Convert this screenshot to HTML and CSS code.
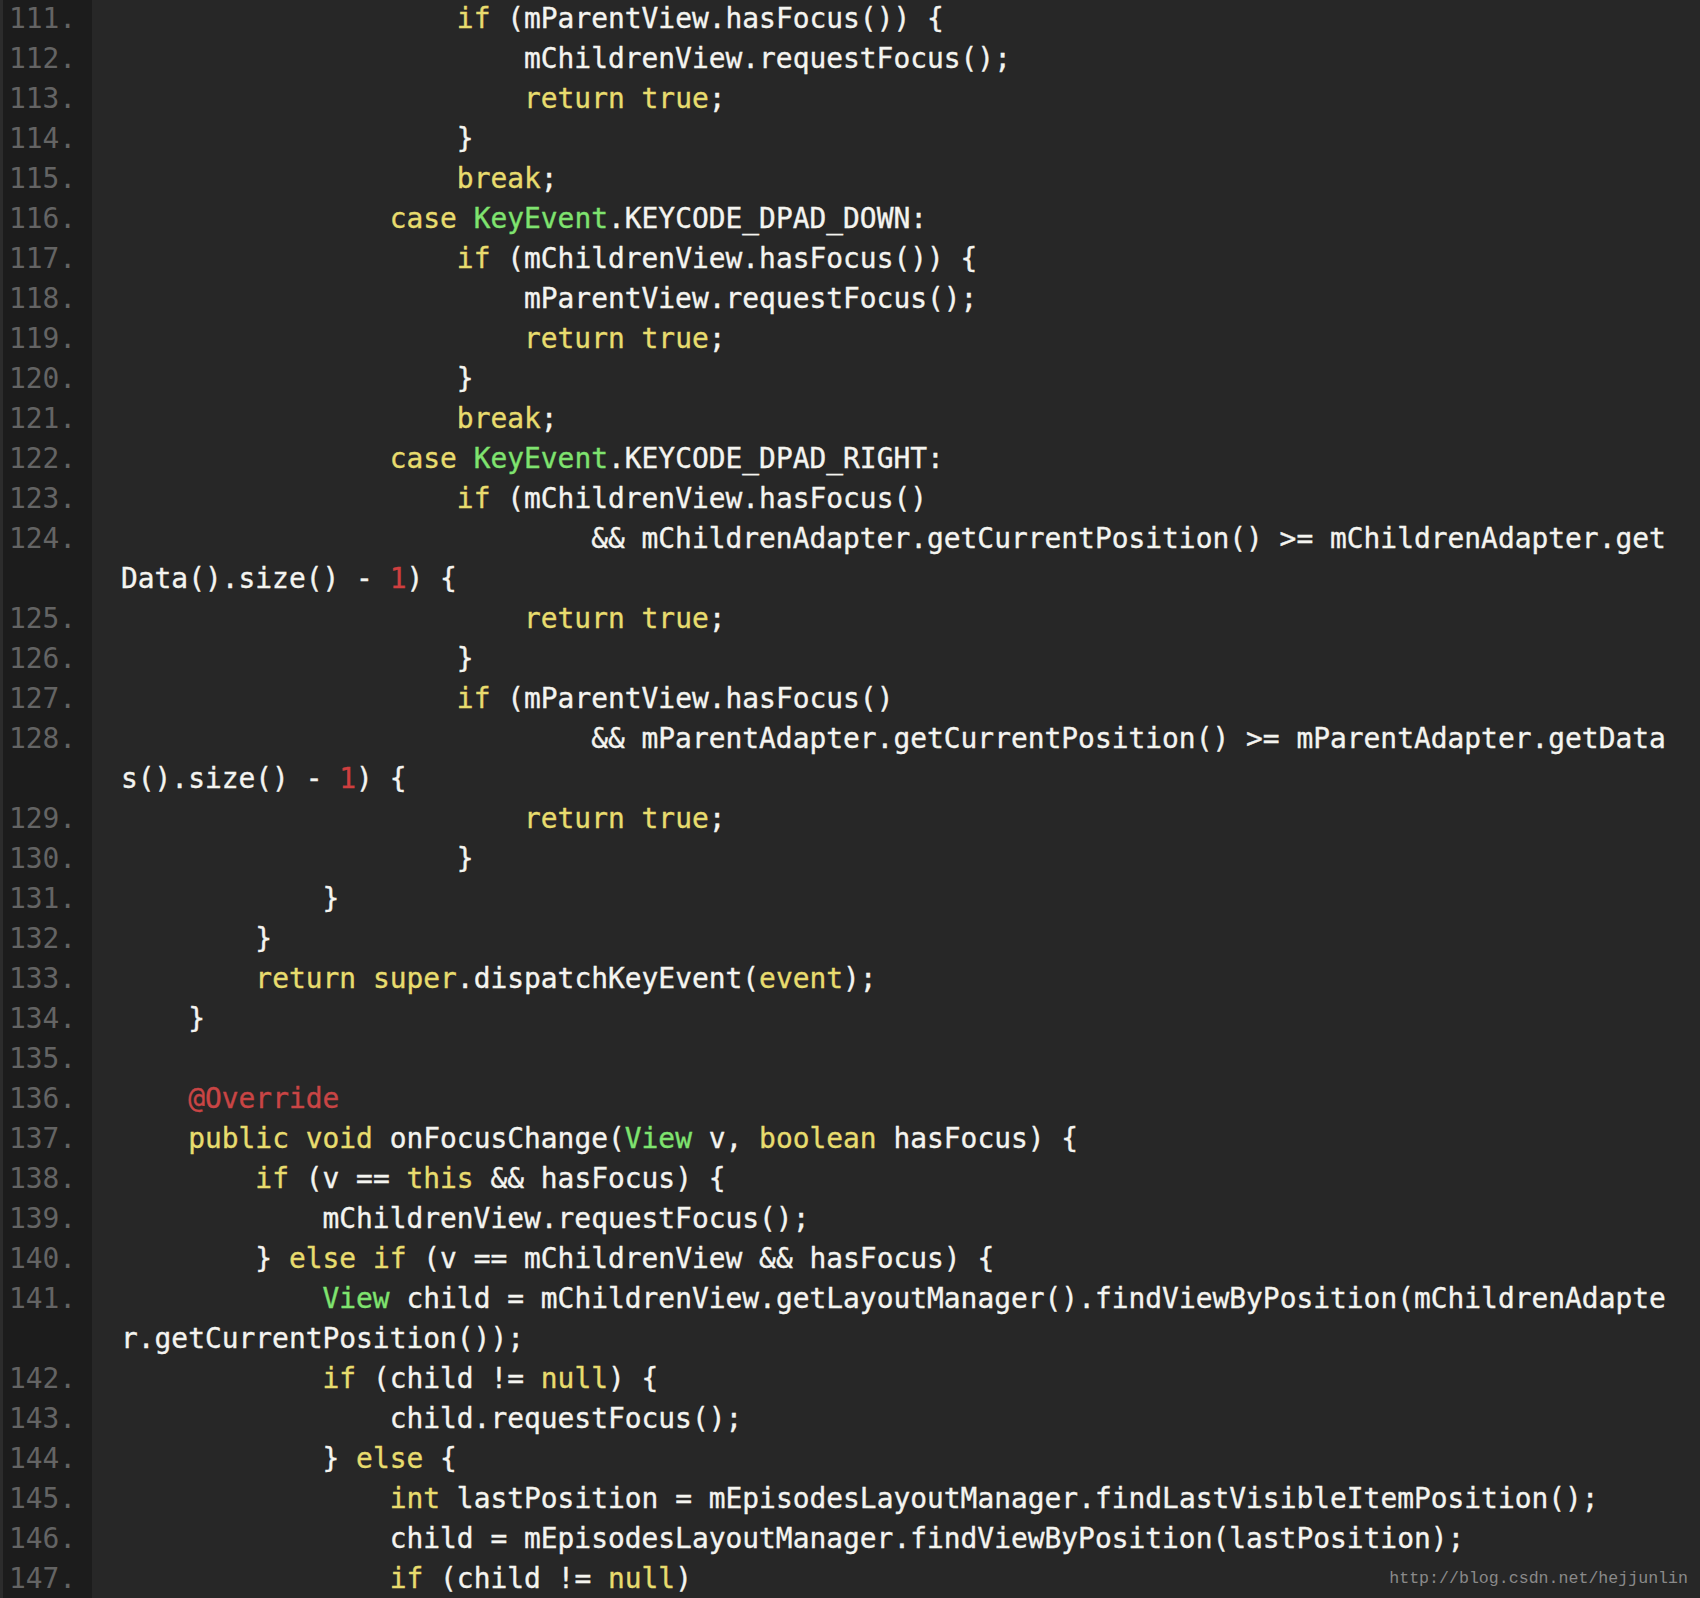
FILE: index.html
```html
<!DOCTYPE html>
<html lang="en">
<head>
  <meta charset="UTF-8" />
  <title>dispatchKeyEvent</title>
  <link rel="stylesheet" href="styles.css">
</head>
<body>

  <div class="editor">
    <div class="row"><span class="no">111.</span><span class="src">                    <b class="kw">if</b> (mParentView.hasFocus()) {</span></div>
    <div class="row"><span class="no">112.</span><span class="src">                        mChildrenView.requestFocus();</span></div>
    <div class="row"><span class="no">113.</span><span class="src">                        <b class="kw">return</b> <b class="kw">true</b>;</span></div>
    <div class="row"><span class="no">114.</span><span class="src">                    }</span></div>
    <div class="row"><span class="no">115.</span><span class="src">                    <b class="kw">break</b>;</span></div>
    <div class="row"><span class="no">116.</span><span class="src">                <b class="kw">case</b> <b class="ty">KeyEvent</b>.KEYCODE_DPAD_DOWN:</span></div>
    <div class="row"><span class="no">117.</span><span class="src">                    <b class="kw">if</b> (mChildrenView.hasFocus()) {</span></div>
    <div class="row"><span class="no">118.</span><span class="src">                        mParentView.requestFocus();</span></div>
    <div class="row"><span class="no">119.</span><span class="src">                        <b class="kw">return</b> <b class="kw">true</b>;</span></div>
    <div class="row"><span class="no">120.</span><span class="src">                    }</span></div>
    <div class="row"><span class="no">121.</span><span class="src">                    <b class="kw">break</b>;</span></div>
    <div class="row"><span class="no">122.</span><span class="src">                <b class="kw">case</b> <b class="ty">KeyEvent</b>.KEYCODE_DPAD_RIGHT:</span></div>
    <div class="row"><span class="no">123.</span><span class="src">                    <b class="kw">if</b> (mChildrenView.hasFocus()</span></div>
    <div class="row"><span class="no">124.</span><span class="src">                            &amp;&amp; mChildrenAdapter.getCurrentPosition() &gt;= mChildrenAdapter.get</span></div>
    <div class="row"><span class="no"></span><span class="src">Data().size() - <b class="nm">1</b>) {</span></div>
    <div class="row"><span class="no">125.</span><span class="src">                        <b class="kw">return</b> <b class="kw">true</b>;</span></div>
    <div class="row"><span class="no">126.</span><span class="src">                    }</span></div>
    <div class="row"><span class="no">127.</span><span class="src">                    <b class="kw">if</b> (mParentView.hasFocus()</span></div>
    <div class="row"><span class="no">128.</span><span class="src">                            &amp;&amp; mParentAdapter.getCurrentPosition() &gt;= mParentAdapter.getData</span></div>
    <div class="row"><span class="no"></span><span class="src">s().size() - <b class="nm">1</b>) {</span></div>
    <div class="row"><span class="no">129.</span><span class="src">                        <b class="kw">return</b> <b class="kw">true</b>;</span></div>
    <div class="row"><span class="no">130.</span><span class="src">                    }</span></div>
    <div class="row"><span class="no">131.</span><span class="src">            }</span></div>
    <div class="row"><span class="no">132.</span><span class="src">        }</span></div>
    <div class="row"><span class="no">133.</span><span class="src">        <b class="kw">return</b> <b class="kw">super</b>.dispatchKeyEvent(<b class="kw">event</b>);</span></div>
    <div class="row"><span class="no">134.</span><span class="src">    }</span></div>
    <div class="row"><span class="no">135.</span><span class="src"></span></div>
    <div class="row"><span class="no">136.</span><span class="src">    <b class="an">@Override</b></span></div>
    <div class="row"><span class="no">137.</span><span class="src">    <b class="kw">public</b> <b class="kw">void</b> onFocusChange(<b class="ty">View</b> v, <b class="kw">boolean</b> hasFocus) {</span></div>
    <div class="row"><span class="no">138.</span><span class="src">        <b class="kw">if</b> (v == <b class="kw">this</b> &amp;&amp; hasFocus) {</span></div>
    <div class="row"><span class="no">139.</span><span class="src">            mChildrenView.requestFocus();</span></div>
    <div class="row"><span class="no">140.</span><span class="src">        } <b class="kw">else</b> <b class="kw">if</b> (v == mChildrenView &amp;&amp; hasFocus) {</span></div>
    <div class="row"><span class="no">141.</span><span class="src">            <b class="ty">View</b> child = mChildrenView.getLayoutManager().findViewByPosition(mChildrenAdapte</span></div>
    <div class="row"><span class="no"></span><span class="src">r.getCurrentPosition());</span></div>
    <div class="row"><span class="no">142.</span><span class="src">            <b class="kw">if</b> (child != <b class="kw">null</b>) {</span></div>
    <div class="row"><span class="no">143.</span><span class="src">                child.requestFocus();</span></div>
    <div class="row"><span class="no">144.</span><span class="src">            } <b class="kw">else</b> {</span></div>
    <div class="row"><span class="no">145.</span><span class="src">                <b class="kw">int</b> lastPosition = mEpisodesLayoutManager.findLastVisibleItemPosition();</span></div>
    <div class="row"><span class="no">146.</span><span class="src">                child = mEpisodesLayoutManager.findViewByPosition(lastPosition);</span></div>
    <div class="row"><span class="no">147.</span><span class="src">                <b class="kw">if</b> (child != <b class="kw">null</b>)</span></div>

    <div class="watermark">http://blog.csdn.net/hejjunlin</div>
  </div>

</body>
</html>
```

FILE: styles.css
```css
* {
  margin: 0;
  padding: 0;
  box-sizing: border-box;
}

html, body {
  height: 100%;
  background: #272727;
  overflow: hidden;
}

.editor {
  position: relative;
  height: 1598px;
  margin-top: -1px;
  font-family: "DejaVu Sans Mono", "Liberation Mono", monospace;
  font-size: 27.9px;
  line-height: 40px;
  color: #f4f4f0;
}

.row {
  display: flex;
  height: 40px;
}

.no {
  flex: 0 0 92px;
  padding-left: 6px;
  border-left: 3px solid #2c2c2c;
  background: #1c1c1c;
  color: #646464;
}

.src {
  padding-left: 29px;
  white-space: pre;
  -webkit-text-stroke: 0.35px currentColor;
}

b {
  font-weight: normal;
}

.kw { color: #e8dc6e; }
.ty { color: #7fe36f; }
.nm { color: #cf3f3f; }
.an { color: #c94545; }

.watermark {
  position: absolute;
  right: 12px;
  bottom: 8px;
  font-family: "Liberation Mono", monospace;
  font-size: 16.6px;
  line-height: 20px;
  color: #8a8a8a;
}
```
